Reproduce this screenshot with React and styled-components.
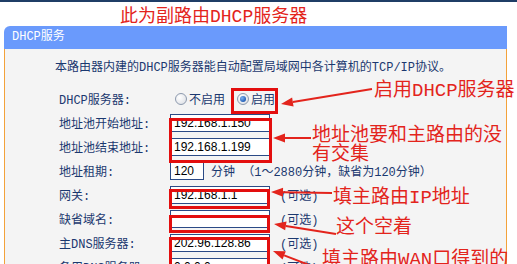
import React from 'react'
import styled, { createGlobalStyle } from 'styled-components'

const NAVY = '#1b386f'
const RED = '#e3241c'

const GlobalStyle = createGlobalStyle`
  html, body {
    margin: 0;
    padding: 0;
    background: #fff;
    overflow: hidden;
  }
  body {
    font-family: "Liberation Mono", "Noto Sans CJK SC", monospace;
  }
`

const Page = styled.div`
  position: relative;
  width: 517px;
  height: 264px;
  overflow: hidden;
  box-sizing: border-box;
  border-top: 2px solid #1f3d66;
`

const Caption = styled.div`
  height: 24px;
  padding-left: 120px;
  font-size: 18px;
  line-height: 30px;
  color: ${RED};
  white-space: nowrap;
`

const Panel = styled.div`
  margin-left: 4px;
  width: 503px;
`

const PanelHeader = styled.div`
  height: 23px;
  padding-left: 8px;
  background: #6a9afc;
  border-top-left-radius: 6px;
  color: #fff;
  font-size: 12px;
  line-height: 23px;
`

const PanelBody = styled.div`
  height: 240px;
  padding: 12px 0 0 50px;
  background: #f4f4f4;
  border-left: 1px solid #f3a23a;
  border-right: 1px solid #f3a23a;
`

const Description = styled.div`
  font-size: 12px;
  line-height: 14px;
  color: ${NAVY};
  white-space: nowrap;
`

const Form = styled.div`
  margin-top: 12px;
  padding-left: 4px;
  display: grid;
  grid-template-columns: 111px 1fr;
  grid-auto-rows: 24px;
  align-items: center;
  font-size: 12px;
  color: ${NAVY};
`

const Label = styled.div`
  white-space: nowrap;
`

const Value = styled.div`
  display: flex;
  align-items: center;
  white-space: nowrap;
`

const RadioOption = styled.label`
  display: flex;
  align-items: center;
  gap: 2px;
  margin-left: ${p => p.$offset}px;
`

const RadioDot = styled.span`
  position: relative;
  width: 12px;
  height: 12px;
  box-sizing: border-box;
  border-radius: 50%;
  border: 1px solid #8d9aae;
  background: radial-gradient(circle at 35% 35%, #ffffff 0%, #e4e6ea 70%, #c9cdd4 100%);

  &::after {
    content: '';
    display: ${p => (p.$checked ? 'block' : 'none')};
    position: absolute;
    left: 2px;
    top: 2px;
    width: 6px;
    height: 6px;
    border-radius: 50%;
    background: radial-gradient(circle at 35% 35%, #7fb2f0 0%, #2460b8 70%, #17427f 100%);
  }
`

const Field = styled.input`
  width: ${p => p.$width}px;
  height: 18px;
  box-sizing: border-box;
  margin: 0;
  padding: 0 3px;
  border: 1px solid #2b4a86;
  background: #fff;
  color: #000;
  font-family: "Liberation Sans", sans-serif;
  font-size: 12px;
  outline: none;
`

const Hint = styled.span`
  margin-left: ${p => p.$gap}px;
`

const Annotations = styled.div`
  position: absolute;
  inset: 0;
  pointer-events: none;
`

const RedBox = styled.div`
  position: absolute;
  left: ${p => p.$x}px;
  top: ${p => p.$y}px;
  width: ${p => p.$w}px;
  height: ${p => p.$h}px;
  box-sizing: border-box;
  border: 3px solid #e30e0e;
`

const RedNote = styled.div`
  position: absolute;
  left: ${p => p.$x}px;
  top: ${p => p.$y}px;
  color: ${RED};
  font-size: 19px;
  line-height: 19px;
  white-space: nowrap;
`

const ArrowLayer = styled.svg`
  position: absolute;
  left: 0;
  top: 0;
`

const Arrow = ({ from, to }) => {
  const [x1, y1] = from
  const [x2, y2] = to
  const len = Math.hypot(x2 - x1, y2 - y1)
  const ux = (x2 - x1) / len
  const uy = (y2 - y1) / len
  const bx = x2 - ux * 12
  const by = y2 - uy * 12
  const head = [
    [x2, y2],
    [bx - uy * 4.5, by + ux * 4.5],
    [bx + uy * 4.5, by - ux * 4.5],
  ].map(p => p.join(',')).join(' ')
  return (
    <g>
      <line x1={x1} y1={y1} x2={bx} y2={by} stroke={RED} strokeWidth="2" />
      <polygon points={head} fill={RED} />
    </g>
  )
}

const rows = [
  { label: '地址池开始地址:', value: '192.168.1.150' },
  { label: '地址池结束地址:', value: '192.168.1.199' },
]

const optionalRows = [
  { label: '网关:', value: '192.168.1.1' },
  { label: '缺省域名:', value: '' },
  { label: '主DNS服务器:', value: '202.96.128.86' },
  { label: '备用DNS服务器:', value: '0.0.0.0' },
]

export default function App() {
  return (
    <Page>
      <GlobalStyle />
      <Caption>此为副路由DHCP服务器</Caption>
      <Panel>
        <PanelHeader>DHCP服务</PanelHeader>
        <PanelBody>
          <Description>本路由器内建的DHCP服务器能自动配置局域网中各计算机的TCP/IP协议。</Description>
          <Form>
            <Label>DHCP服务器:</Label>
            <Value>
              <RadioOption $offset={5}>
                <RadioDot />
                不启用
              </RadioOption>
              <RadioOption $offset={12}>
                <RadioDot $checked />
                启用
              </RadioOption>
            </Value>

            {rows.map(row => (
              <React.Fragment key={row.label}>
                <Label>{row.label}</Label>
                <Value>
                  <Field $width={100} readOnly value={row.value} />
                </Value>
              </React.Fragment>
            ))}

            <Label>地址租期:</Label>
            <Value>
              <Field $width={34} readOnly value="120" />
              <Hint $gap={7}>分钟 （1～2880分钟，缺省为120分钟）</Hint>
            </Value>

            {optionalRows.map(row => (
              <React.Fragment key={row.label}>
                <Label>{row.label}</Label>
                <Value>
                  <Field $width={100} readOnly value={row.value} />
                  <Hint $gap={10}>(可选)</Hint>
                </Value>
              </React.Fragment>
            ))}
          </Form>
        </PanelBody>
      </Panel>

      <Annotations>
        <RedBox $x={231} $y={86} $w={47} $h={26} />
        <RedBox $x={169} $y={116} $w={103} $h={45} />
        <RedBox $x={169} $y={187} $w={101} $h={20} />
        <RedBox $x={169} $y={213} $w={101} $h={18} />
        <RedBox $x={169} $y={235} $w={101} $h={40} />

        <RedNote $x={374} $y={80}>启用DHCP服务器</RedNote>
        <RedNote $x={312} $y={125}>地址池要和主路由的没<br />有交集</RedNote>
        <RedNote $x={333} $y={187}>填主路由IP地址</RedNote>
        <RedNote $x={336} $y={217}>这个空着</RedNote>
        <RedNote $x={322} $y={249}>填主路由WAN口得到的</RedNote>

        <ArrowLayer width="517" height="264">
          <Arrow from={[372, 87]} to={[281, 102]} />
          <Arrow from={[311, 136]} to={[273, 136]} />
          <Arrow from={[332, 191]} to={[271, 190]} />
          <Arrow from={[336, 232]} to={[274, 222]} />
          <Arrow from={[322, 268]} to={[273, 249]} />
        </ArrowLayer>
      </Annotations>
    </Page>
  )
}
